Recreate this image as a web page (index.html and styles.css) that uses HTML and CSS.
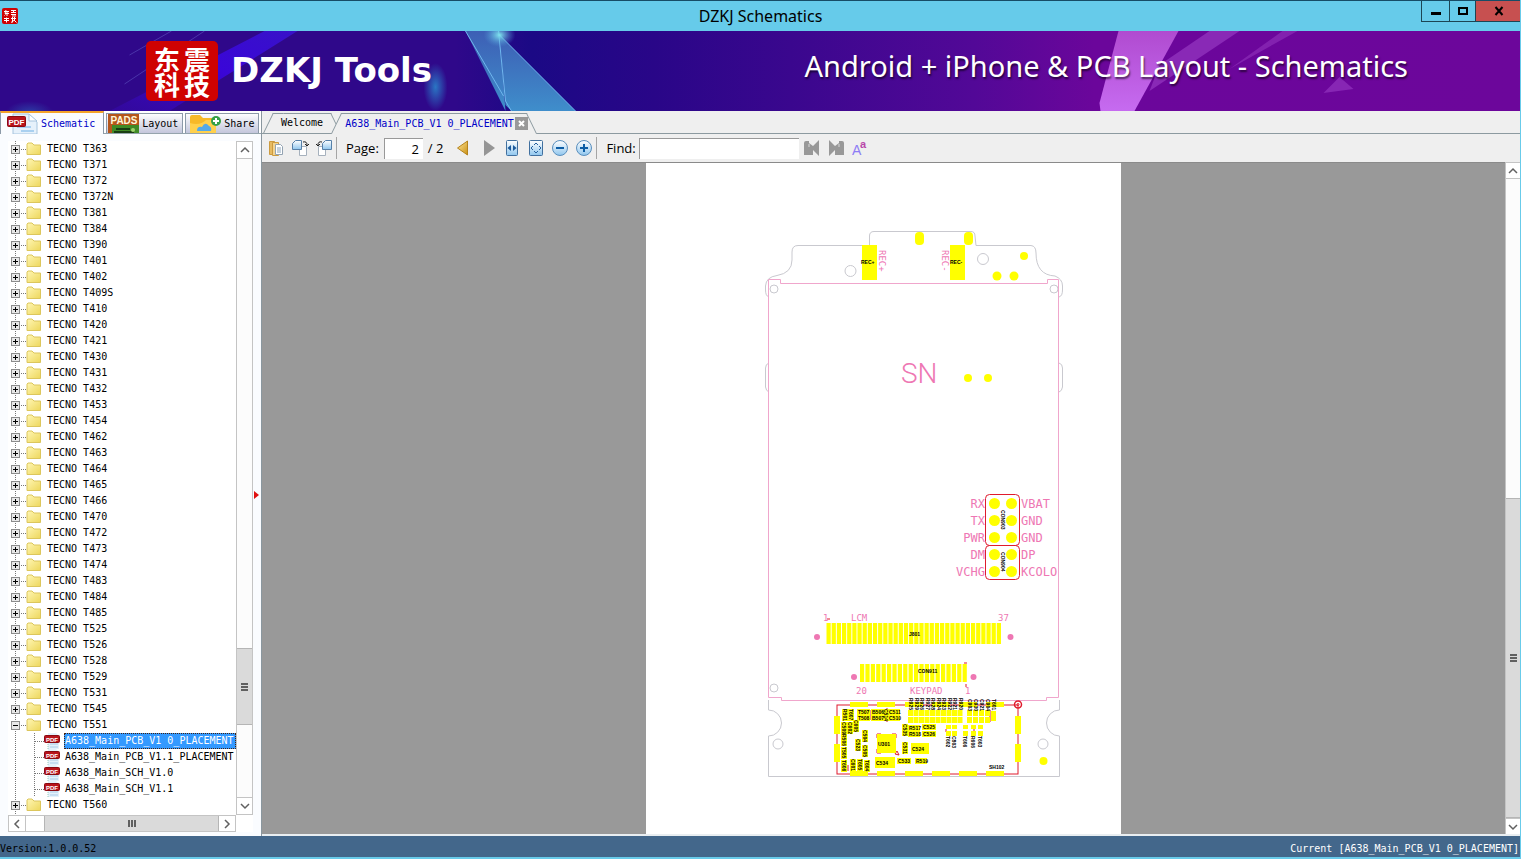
FILE: index.html
```html
<!DOCTYPE html>
<html lang="en">
<head>
<meta charset="UTF-8">
<meta name="viewport" content="width=device-width, initial-scale=1.0">
<title>DZKJ Schematics</title>
<link rel="stylesheet" href="styles.css">
</head>
<body>

<svg class="defs" aria-hidden="true">
  <defs>
    <linearGradient id="gFolder" x1="0" y1="0" x2="1" y2="1"><stop offset="0" stop-color="#fff6b4"/><stop offset="1" stop-color="#edd75c"/></linearGradient>
    <linearGradient id="gBlue" x1="0" y1="0" x2="0" y2="1"><stop offset="0" stop-color="#fff"/><stop offset="1" stop-color="#8fc6ee"/></linearGradient>
    <linearGradient id="gGold" x1="0" y1="0" x2="1" y2="1"><stop offset="0" stop-color="#ffe79a"/><stop offset="1" stop-color="#c98f12"/></linearGradient>
  </defs>
  <symbol id="i-folder" viewBox="0 0 16 14"><path d="M1 12.500V2L2 1H6L8 3H14.500V12.500Z" fill="url(#gFolder)" stroke="#dcc65c"/></symbol>
  <symbol id="i-pdf" viewBox="0 0 16 16"><path d="M4 0H12L15 3V16H4Z" fill="#e3f1fb"/><path d="M6 11H14M6 14H14" stroke="#a9cbe8"/><path d="M4 9V16" stroke="#9cb" stroke-dasharray="1 1"/><rect x="0.500" y="2.500" width="15" height="7" rx="1" fill="#b8141c" stroke="#8a0a12"/><text x="8" y="8.500" font-size="6" font-weight="700" text-anchor="middle" fill="#fff">PDF</text></symbol>
</svg>

<header class="titlebar">
  <svg class="app-icon" width="16" height="16"><rect width="16" height="16" rx="2" fill="#cf0202"/><path d="M2 3.500H7M4 2L3 5.500H7M5 4V8M2.500 7.500L3.500 6.500M9 2.500H14M9 4.500H14M11.500 2V5M9 6.500H14M10 8H14M2 10.500H7M2 12.500H7M4.500 9.500V14.500M9 10.500H14M10.500 9V14.500M12.500 9V12L9 14.500M12 12L14.500 14.500" stroke="#fff" fill="none"/></svg>
  <h1>DZKJ Schematics</h1>
  <div class="win-btns">
    <button class="min" aria-label="Minimize"><svg width="12" height="12"><path d="M1 8.500H11" stroke="#000" stroke-width="3"/></svg></button>
    <button class="max" aria-label="Maximize"><svg width="12" height="12"><rect x="2" y="3" width="8" height="6" fill="none" stroke="#000" stroke-width="2"/></svg></button>
    <button class="close" aria-label="Close"><svg width="10" height="10"><path d="M1.500 1L8.500 9M8.500 1L1.500 9" stroke="#000" stroke-width="2"/></svg></button>
  </div>
</header>

<div class="banner">
  <svg class="banner-art" viewBox="0 0 1521 80" preserveAspectRatio="xMidYMid slice" aria-hidden="true">
    <defs>
      <linearGradient id="bg"><stop offset="0" stop-color="#2f088a"/><stop offset=".3" stop-color="#2f088a"/><stop offset=".35" stop-color="#1b0985"/><stop offset=".43" stop-color="#290688"/><stop offset=".52" stop-color="#3a078e"/><stop offset=".64" stop-color="#520897"/><stop offset=".72" stop-color="#6b069b"/><stop offset="1" stop-color="#6c069b"/></linearGradient>
      <linearGradient id="beam" x1="1" y1="0" x2="0" y2="1"><stop offset="0" stop-color="#3812c8"/><stop offset=".45" stop-color="#3a06d8"/><stop offset="1" stop-color="#3a0ac0" stop-opacity=".3"/></linearGradient>
      <linearGradient id="glass" x1="0" y1="0" x2="0" y2="1"><stop offset="0" stop-color="#3d5fb5"/><stop offset="1" stop-color="#3f8ecb"/></linearGradient>
      <linearGradient id="pink" x1="0" y1="0" x2="0" y2="1"><stop offset="0" stop-color="#b04bd0"/><stop offset="1" stop-color="#c66bf0"/></linearGradient>
      <radialGradient id="glow"><stop offset="0" stop-color="#2a76c4"/><stop offset="1" stop-color="#2a76c4" stop-opacity="0"/></radialGradient>
      <radialGradient id="glow2"><stop offset="0" stop-color="#7fe4ee"/><stop offset="1" stop-color="#4e9ad8" stop-opacity="0"/></radialGradient>
    </defs>
    <rect width="1521" height="80" fill="url(#bg)"/>
    <path d="M265 0H298L170 80H110Z" fill="url(#beam)"/>
    <path d="M205 0L125 53M172 0L130 24" stroke="#5748b8" stroke-opacity=".7"/>
    <path d="M466 0H500L506 80Z" fill="url(#glass)"/>
    <path d="M500 4L506 74L512 80H576Z" fill="url(#glass)"/>
    <path d="M466 0L504 65M500 4L576 80M499 0L506 70L512 80" stroke="#6fb7ee" fill="none"/>
    <ellipse cx="500" cy="4" rx="16" ry="12" fill="url(#glow2)"/>
    <ellipse cx="436" cy="56" rx="12" ry="24" fill="url(#glow)"/>
    <ellipse cx="30" cy="82" rx="24" ry="12" fill="url(#glow)" opacity=".5"/>
    <path d="M1119 0H1179L1135 80H1101L1100 72Z" fill="url(#pink)"/>
    <path d="M1210 0H1240L1150 60L1160 34Z" fill="#9a3cc4" opacity=".65"/>
    <path d="M1283 0H1298L1230 38Z" fill="#9a3cc4" opacity=".5"/>
    <path d="M1324 62L1340 46L1354 58Z" fill="#9a3cc4" opacity=".6"/>
  </svg>
  <div class="logo"><span>东</span><span>震</span><span>科</span><span>技</span></div>
  <strong class="brand">DZKJ Tools</strong>
  <span class="slogan">Android + iPhone &amp; PCB Layout - Schematics</span>
</div>

<main class="main">
  <aside class="side">
    <nav class="side-tabs" role="tablist">
      <button class="side-tab active" role="tab" aria-selected="true">
        <svg width="31" height="21"><path d="M6 1H22L30 9V21H6Z" fill="#e6f1fb" stroke="#a6c4de"/><path d="M22 1V8H30Z" fill="#fff" stroke="#a6c4de"/><path d="M10 14H24M14 18H27" stroke="#a9d0f0" stroke-width="2"/><rect x="0.500" y="3.500" width="18" height="10" rx="1" fill="#b9131b" stroke="#8b0a10"/><text x="9.500" y="12" font-size="8" font-weight="700" text-anchor="middle" fill="#fff">PDF</text></svg>
        Schematic
      </button>
      <button class="side-tab" role="tab">
        <svg width="31" height="19"><rect width="31" height="19" fill="#b5561b"/><rect x="4" y="11" width="27" height="8" fill="#3f8a26"/><path d="M8 15H22M6 18H26" stroke="#183d13" stroke-width="2"/><circle cx="25" cy="16" r="2" fill="#9ed36d"/><text x="16" y="10" font-size="10" font-weight="700" text-anchor="middle" fill="#fff6d8">PADS</text></svg>
        Layout
      </button>
      <button class="side-tab share" role="tab">
        <svg width="31" height="19"><path d="M0 3Q0 1 2 1H10L13 4H24Q26 4 26 6V19H2Q0 19 0 17Z" fill="#f7b928"/><path d="M0 9Q10 12 16 6H26V19H0Z" fill="#ffd04c"/><path d="M7 17Q7 12 12 13Q15 7 19 12Q22 13 21 17Z" fill="#55a9e8"/><circle cx="26" cy="7" r="5" fill="#35a047"/><path d="M26 4V10M23 7H29" stroke="#fff" stroke-width="2"/></svg>
        Share
      </button>
    </nav>
    <div class="side-body">
      <div class="tree-box">
        <div class="tree-row">
          <ul class="tree" id="tree"></ul>
          <div class="vbar">
            <button aria-label="Scroll up"><svg width="10" height="8"><path d="M1 6L5 2L9 6" class="chev"/></svg></button>
            <div class="track tree-track"><div class="thumb"><i class="grip"></i></div></div>
            <button aria-label="Scroll down"><svg width="10" height="8"><path d="M1 2L5 6L9 2" class="chev"/></svg></button>
          </div>
        </div>
        <div class="hbar">
          <button aria-label="Scroll left"><svg width="8" height="10"><path d="M6 1L2 5L6 9" class="chev"/></svg></button>
          <div class="htrack"><div class="thumb"><i class="grip side-grip"></i></div></div>
          <button aria-label="Scroll right"><svg width="8" height="10"><path d="M2 1L6 5L2 9" class="chev"/></svg></button>
        </div>
      </div>
      <div class="splitter"><svg width="5" height="8"><path d="M0 0L5 4L0 8Z" fill="#e01010"/></svg></div>
    </div>
  </aside>

  <section class="work">
    <nav class="doc-tabs" role="tablist">
      <button class="doc-tab" role="tab"><span>Welcome</span></button>
      <div class="doc-tab active"><span role="tab" aria-selected="true">A638_Main_PCB_V1 0_PLACEMENT</span><button class="tab-x" aria-label="Close tab"><svg width="7" height="7"><path d="M1 1L6 6M6 1L1 6" stroke="#fff" stroke-width="2"/></svg></button></div>
    </nav>

    <div class="toolbar">
      <button class="tool" aria-label="Bookmarks"><svg width="16" height="16"><path d="M1.500 1.500H6.500V14.500H1.500Z" fill="#e7bb62" stroke="#cc9b3f"/><path d="M4.500 2.500H10.500V15.500H4.500Z" fill="#f4d490" stroke="#cc9b3f"/><path d="M7.500 4.500H12.500L14.500 6.500V14.500H7.500Z" fill="#fff" stroke="#93a3b2"/><path d="M9 8H13M9 10H13M9 12H13" stroke="#8ba4bb"/></svg></button>
      <button class="tool" aria-label="Rotate right"><svg width="17" height="16"><path d="M7.500 6.500H14.500V15.500H7.500Z" fill="#fff" stroke="#a6b1bd"/><path d="M3.500 .5H9.500V9.500H.5V3.500Z" fill="url(#gBlue)" stroke="#5780a8"/><path d="M11 2Q15 1 15 5M13 4L15 6L17 4" stroke="#222" fill="none"/></svg></button>
      <button class="tool" aria-label="Rotate left"><svg width="17" height="16"><path d="M2.500 6.500H9.500V15.500H2.500Z" fill="#fff" stroke="#a6b1bd"/><path d="M9.500 .5H15.500V9.500H6.500V3.500Z" fill="url(#gBlue)" stroke="#5780a8"/><path d="M6 2Q2 1 2 5M0 4L2 6L4 4" stroke="#222" fill="none"/></svg></button>
      <i class="sep"></i>
      <label for="page">Page:</label>
      <input id="page" type="text" value="2">
      <span class="total">/ 2</span>
      <button class="tool" aria-label="Previous page"><svg width="12" height="16"><path d="M10.500 1V15L.5 8Z" fill="url(#gGold)" stroke="#b5831c"/></svg></button>
      <button class="tool next" aria-label="Next page"><svg width="12" height="16"><path d="M1 0V16L12 8Z" fill="#959595"/></svg></button>
      <button class="tool" aria-label="Fit width"><svg width="14" height="16"><rect x="1.500" y=".5" width="11" height="15" rx="1" fill="url(#gBlue)" stroke="#41709f"/><path d="M6 5V11L2.500 8ZM8 5V11L11.500 8Z" fill="#1c5a9c"/></svg></button>
      <button class="tool" aria-label="Fit page"><svg width="14" height="16"><rect x=".5" y=".5" width="13" height="15" rx="1" fill="url(#gBlue)" stroke="#41709f"/><path d="M5 5L7 3L9 5M5 11L7 13L9 11M4 6L2 8L4 10M10 6L12 8L10 10" stroke="#27629f" fill="none"/></svg></button>
      <button class="tool" aria-label="Zoom out"><svg width="16" height="16"><circle cx="8" cy="8" r="7.500" fill="url(#gBlue)" stroke="#5a8fbd"/><path d="M4 8H12" stroke="#0c5da5" stroke-width="2"/></svg></button>
      <button class="tool" aria-label="Zoom in"><svg width="16" height="16"><circle cx="8" cy="8" r="7.500" fill="url(#gBlue)" stroke="#5a8fbd"/><path d="M4 8H12M8 4V12" stroke="#0c5da5" stroke-width="2"/></svg></button>
      <i class="sep"></i>
      <label for="find">Find:</label>
      <input id="find" type="text">
      <button class="tool find-prev" aria-label="Find previous"><svg width="16" height="16"><path d="M0 3Q0 1 2 1H5V3L9 6L15 0V16L9 10V15H0Z" fill="#989898"/><path d="M5 4V7" stroke="#d8d8d8"/></svg></button>
      <button class="tool" aria-label="Find next"><svg width="16" height="16"><path d="M16 3Q16 1 14 1H11V3L7 6L1 0V16L7 10V15H16Z" fill="#989898"/><path d="M11 4V7" stroke="#d8d8d8"/></svg></button>
      <button class="tool" aria-label="Match case"><svg width="16" height="16"><text x="0" y="15" font-size="14" fill="#8d7cf5">A</text><text x="8" y="8" font-size="11" font-weight="700" fill="#b847a9">a</text></svg></button>
    </div>

    <div class="viewer">
      <div class="desk">
        <div class="sheet"><svg id="pcb" width="475" height="671" viewBox="646 163 475 671" role="img" aria-label="PCB placement">
          <g class="outline">
            <path d="M769 297Q765.500 296 765.500 290V286Q766 277 777 275.500Q792 273 792 260V252Q792 245.500 798 245.500H869.500V236Q869.500 231.500 874 231.500H971Q975 231.500 975 236L976 245.500H1031Q1036 246 1036 253Q1036 275 1055 276Q1062.500 279 1062.500 286V290Q1062.500 296 1059 297"/>
            <path d="M769 363Q765.500 364 765.500 368V387Q766 391 769 392M1059 363Q1062.500 364 1062.500 368V387Q1062 391 1059 392"/>
            <path d="M768.500 700V710A13 13 0 1 1 768.500 736V776.500H1059.500V736A13 13 0 1 1 1059.500 710V700"/>
            <circle cx="850.500" cy="271" r="5.500"/><circle cx="983" cy="259" r="5.500"/>
            <circle cx="774" cy="289" r="4"/><circle cx="1054" cy="289" r="4"/><circle cx="774" cy="688" r="4"/>
            <circle cx="778" cy="744" r="5"/><circle cx="1043" cy="744" r="5"/>
          </g>
          <path class="shield" d="M768.500 697.500V279.500H780.500V283.500H1047.500V279.500H1058.500V697.500H1046.500V700.500H781.500V697.500Z"/>
          <g class="pad">
            <rect x="862" y="245" width="15" height="35"/><rect x="950" y="245" width="15" height="35"/>
            <rect x="915" y="232" width="9" height="13" rx="4"/><rect x="964" y="232" width="9" height="13" rx="4"/>
            <circle cx="1024" cy="256" r="4"/><circle cx="997" cy="276" r="4.500"/><circle cx="1014" cy="276" r="4.500"/>
            <circle cx="968" cy="378" r="4"/><circle cx="988" cy="378" r="4"/><circle cx="1043.500" cy="761" r="4"/>
          </g>
          <g class="red"><rect x="985.500" y="494.500" width="34" height="51" rx="4"/><rect x="985.500" y="545.500" width="34" height="34" rx="4"/></g>
          <g class="silk">
            <text x="901" y="383" class="sn">SN</text>
            <text x="1021" y="508">VBAT</text><text x="1021" y="525">GND</text><text x="1021" y="542">GND</text><text x="1021" y="559">DP</text><text x="1021" y="576">KCOLO</text>
            <g text-anchor="end"><text x="985" y="508">RX</text><text x="985" y="525">TX</text><text x="985" y="542">PWR</text><text x="985" y="559">DM</text><text x="985" y="576">VCHG</text></g>
            <g class="small"><text x="823" y="621">1</text><text x="851" y="621">LCM</text><text x="998" y="621">37</text><text x="856" y="694">20</text><text x="910" y="694">KEYPAD</text><text x="965" y="694">1</text>
            <text transform="translate(879 250) rotate(90)">REC+</text><text transform="translate(942 250) rotate(90)">REC-</text></g>
            <circle cx="817" cy="637" r="3"/><circle cx="1010.500" cy="637" r="3"/><circle cx="854" cy="677" r="3"/><circle cx="973.500" cy="677" r="3"/>
          </g>
        </svg></div>
      </div>
      <div class="vbar doc-bar">
        <button aria-label="Scroll up"><svg width="10" height="8"><path d="M1 6L5 2L9 6" class="chev"/></svg></button>
        <div class="track doc-track"><div class="thumb"><i class="grip"></i></div></div>
        <button aria-label="Scroll down"><svg width="10" height="8"><path d="M1 2L5 6L9 2" class="chev"/></svg></button>
      </div>
    </div>
  </section>
</main>

<footer class="status"><span>Version:1.0.0.52</span><span class="current">Current [A638_Main_PCB_V1 0_PLACEMENT]</span></footer>

<script src="script.js"></script>
</body>
</html>
```
FILE: styles.css
```css
*{box-sizing:border-box}
html,body{height:100%;margin:0}
body{display:flex;flex-direction:column;overflow:hidden;background:#efefef;color:#000;font:10px/16px "DejaVu Sans Mono","Liberation Mono",monospace;border-right:1px solid #68cbea}
button{font:inherit;color:inherit;margin:0;padding:0;border:0;background:none;display:flex;align-items:center;justify-content:center}
svg{display:block;flex:none}
svg text{font-family:"Liberation Sans",sans-serif}
ul{list-style:none;margin:0;padding:0}
.defs{position:absolute;width:0;height:0}

/* ---------- title bar ---------- */
.titlebar{position:relative;flex:none;height:31px;display:flex;align-items:center;background:#66cbea;border-top:1px solid #174c66;padding:0 18px 0 2px;margin-right:-1px}
.titlebar h1{flex:1;margin:0;text-align:center;font:400 16px/20px "Noto Sans","Open Sans",sans-serif}
.win-btns{position:absolute;right:0;top:0;display:flex;height:21px;border:1px solid #1c4554;border-width:0 0 1px 1px}
.win-btns button{width:28px;border-right:1px solid #1c4554}
.win-btns .max{width:26px}
.win-btns .close{width:45px;background:#c75050;border-right:0}

/* ---------- banner ---------- */
.banner{position:relative;flex:none;height:80px;display:flex;align-items:center;padding:0 112px 0 146px;color:#fff;overflow:hidden}
.banner-art{position:absolute;left:0;top:0;width:100%;height:100%}
.logo{position:relative;flex:none;width:72px;height:60px;padding:5px 6px;display:grid;grid-template-columns:1fr 1fr;grid-template-rows:1fr 1fr;place-items:center;background:#cf0202;border-radius:5px;font:700 26px/25px "Noto Sans CJK SC",sans-serif}
.brand{position:relative;margin-left:13px;padding-bottom:2px;font:700 34px/40px "DejaVu Sans",sans-serif}
.slogan{position:relative;margin-left:auto;padding-bottom:10px;font:400 29px/36px "Noto Sans",sans-serif;text-shadow:1px 2px 2px rgba(0,0,0,.6);white-space:nowrap}

.main{flex:1;min-height:0;display:flex}

/* ---------- left side ---------- */
.side{flex:none;width:262px;display:flex;flex-direction:column;border-right:1px solid #8a979f}
.side-tabs{flex:none;height:23px;display:flex;align-items:flex-end;gap:2px;background:#fff;border-bottom:1px solid #94a3ad}
.side-tab{height:20px;gap:3px;padding:0 4px 0 1px;overflow:hidden;border:1px solid #8c9aa8;border-bottom:0;background:linear-gradient(#fdfdfe,#c3c6dc)}
.side-tab.share{padding-left:4px}
.side-tab.active{height:23px;margin-bottom:-1px;padding:0 8px 0 6px;background:#fafcff;border-color:#8c9aa8;border-top:2px solid #f4a32a;color:#0000c8}
.side-body{flex:1;min-height:0;display:flex;padding:7px 0 4px 8px;background:#fafcff}
.tree-box{flex:1;min-width:0;display:flex;flex-direction:column;background:#fff}
.tree-row{flex:1;min-height:0;display:flex}
.tree{flex:1;min-width:0;overflow:hidden;background:linear-gradient(#777 1px,transparent 1px) 7px 0/1px 2px repeat-y}
.node{display:flex;align-items:center;height:16px;padding-left:3px;white-space:nowrap}
.node .toggle{width:9px;height:9px;border:1px solid #8c8c8c;background:#e8e8e8}
.node .toggle::before{content:"";width:5px;height:1px;background:#000}
.node .toggle::after{content:"";width:1px;height:5px;margin-left:-3px;margin-right:2px;background:#000}
.node.open .toggle::after{display:none}
.dots{width:6px;height:1px;background:linear-gradient(90deg,#777 1px,transparent 1px) 1px 0/2px 1px}
.node svg{margin-right:4px}
.kids{margin-left:26px;background:linear-gradient(#777 1px,transparent 1px) 0 0/1px 2px repeat-y}
.kids .node{padding-left:0}
.kids .dots{width:10px}
.name{padding:0 1px}
.kids .selected .name{flex:1;background:#3399ff;color:#fff;outline:1px dotted #421;outline-offset:-1px}
.splitter{width:8px;display:flex;align-items:center;padding:16px 0 0 1px}

/* ---------- scroll bars ---------- */
.vbar{flex:none;width:17px;display:flex;flex-direction:column;border:1px solid #c4c4c4;background:#fcfcfc}
.vbar button{height:16px;background:#fff}
.chev{fill:none;stroke:#606060;stroke-width:1.500}
.track{flex:1;display:flex;flex-direction:column;border:1px solid #c4c4c4;border-width:1px 0}
.track::before{content:"";flex:491}
.track::after{content:"";flex:72}
.track .thumb{flex:76}
.doc-track::before{flex:320}
.doc-track::after{flex:0}
.doc-track .thumb{flex:320}
.thumb{display:flex;align-items:center;justify-content:center;background:#dadada;border:1px solid #b5b5b5;border-width:1px 0}
.grip{width:7px;height:8px;background:repeating-linear-gradient(#606060 0 2px,transparent 2px 3px)}
.grip.side-grip{width:8px;height:7px;background:repeating-linear-gradient(90deg,#606060 0 2px,transparent 2px 3px)}
.hbar{flex:none;height:17px;margin-right:17px;display:flex;border:1px solid #c4c4c4}
.hbar button{width:16px}
.htrack{flex:1;display:flex;padding-left:18px;border-left:1px solid #c4c4c4}
.htrack .thumb{flex:1;border-width:0 1px}
.doc-bar{width:15px;border-width:1px 0 0 1px}
.doc-bar button{height:15px}

/* ---------- work area ---------- */
.work{flex:1;min-width:0;display:flex;flex-direction:column}
.doc-tabs{flex:none;height:23px;display:flex;align-items:flex-end;padding-left:6px;border-bottom:1px solid #8c9aa0}
.doc-tab{position:relative;z-index:0;height:20px;display:flex;align-items:center;padding:0 13px}
.doc-tab::before,.doc-tab::after{content:"";position:absolute;z-index:-1;top:0;bottom:0;border-top:1px solid #8c9aa0;background:#efefef}
.doc-tab::before{left:0;right:30%;border-left:1px solid #8c9aa0;transform:skewX(-26deg)}
.doc-tab::after{left:30%;right:0;border-right:1px solid #8c9aa0;transform:skewX(26deg)}
.doc-tab.active{margin-bottom:-1px;height:21px;padding:0 4px 0 9px;color:#0000c8}
.tab-x{width:13px;height:13px;margin-left:1px;background:#999}
.toolbar{flex:none;height:28px;display:flex;align-items:center;padding-left:6px;gap:8px;font:13px/18px "Open Sans",sans-serif}
.tool{width:16px;height:20px}
.sep{width:1px;height:22px;margin:0 1px 0 -4px;background:#a5a5a5}
.toolbar input{height:21px;border:1px solid #999;border-width:1px 0 0 1px;padding:0 4px;font:inherit;background:#fff}
#page{width:39px;margin-left:-3px;text-align:right}
.total{margin-left:-3px;margin-right:4px}
.next{margin-left:2px;margin-right:-1px}
#find{width:160px;margin-left:-5px}
.find-prev{margin-left:-3px}
.viewer{flex:1;min-height:0;display:flex;border-bottom:2px solid #e9eef1}
.desk{flex:1;min-width:0;display:flex;justify-content:center;background:#999;border-top:1px solid #8a8a8a;overflow:hidden}
.sheet{background:#fff}

/* ---------- board ---------- */
.outline{fill:none;stroke:#c9c9cf}
.shield{fill:none;stroke:#f0a6cc}
.pad{fill:#ffff00}
.red{fill:none;stroke:#e01b2c}
.silk{fill:#ee77b3}
.silk text{font-family:"DejaVu Sans Mono",monospace;font-size:12px}
.silk .small text{font-size:9px}
.silk .sn{font-family:Roboto,sans-serif;font-size:28px;font-weight:300}
.ref text{font-size:5px;font-weight:700;fill:#000}

.status{flex:none;height:23px;display:flex;justify-content:space-between;align-items:flex-end;background:#43678b;border-bottom:2px solid #68cbea}
.current{color:#fff;padding-right:1px}
```
FILE: script.js
```js
const models = ["T363","T371","T372","T372N","T381","T384","T390","T401","T402","T409S","T410","T420","T421","T430","T431","T432","T453","T454","T462","T463","T464","T465","T466","T470","T472","T473","T474","T483","T484","T485","T525","T526","T528","T529","T531","T545","T551","T560"];
const files = ["A638_Main_PCB_V1 0_PLACEMENT","A638_Main_PCB_V1.1_PLACEMENT","A638_Main_SCH_V1.0","A638_Main_SCH_V1.1"];

document.getElementById("tree").innerHTML = models.map(m => {
  const open = m === "T551";
  const kids = files.map((f, i) => `<li class="node${i ? "" : " selected"}"><i class="dots"></i><svg width="16" height="16"><use href="#i-pdf"/></svg><span class="name">${f}</span></li>`).join("");
  return `<li><div class="node${open ? " open" : ""}"><button class="toggle" aria-label="Toggle TECNO ${m}"></button><i class="dots"></i><svg width="16" height="14"><use href="#i-folder"/></svg><span class="name">TECNO ${m}</span></div>${open ? `<ul class="kids">${kids}</ul>` : ""}</li>`;
}).join("");

// board parts
const pads = [], red = [], refs = [];
const pad = (x, y, w, h) => pads.push(`<rect x="${x}" y="${y}" width="${w}" height="${h}"/>`);
const ref = (t, x, y) => refs.push(`<text x="${x}" y="${y}">${t}</text>`);
const vref = (t, x, y) => refs.push(`<text transform="translate(${x} ${y}) rotate(90)">${t}</text>`);
const part = (t, x, y, w, h) => { pad(x, y, w, h); ref(t, x + 1, y + h / 2 + 2); };
const vpart = (t, x, y) => { pad(x, y, 6, 12); vref(t, x + 1, y); };

// test pads of the two connectors
[503.5, 520.5, 537.5, 554.5, 571.5].forEach(y => pads.push(`<circle cx="994.5" cy="${y}" r="5.500"/><circle cx="1011.5" cy="${y}" r="5.500"/>`));
for (let i = 0; i < 34; i++) pad(826.5 + i * 5.16, 623, 4.2, 21);
for (let i = 0; i < 20; i++) pad(860 + i * 5.4, 664, 4.2, 18);

// shield frame
red.push(`<rect x="837" y="705" width="181" height="69"/><circle cx="1018" cy="704.5" r="3.500" stroke-width="1.500"/><circle cx="1018" cy="704.5" r="1"/>`);
[850, 877, 905, 932, 959, 986].forEach(x => { pad(x, 702, 18, 5); pad(x, 771, 18, 5); });
[716, 744].forEach(y => { pad(834, y, 6, 18); pad(1015, y, 6, 18); });

["R925","R929","R926","R927","R928","R924","R923","R922","R921","R920"].forEach((t, i) => { pad(908 + i * 5.5, 710, 5, 6); pad(908 + i * 5.5, 717, 5, 6); vref(t, 909 + i * 5.5, 698); });
["C903","C930","C921","C904"].forEach((t, i) => { pad(967 + i * 6, 710, 5, 6); pad(967 + i * 6, 717, 5, 6); vref(t, 968 + i * 6, 699); });
pad(991, 711, 5, 10); vref("T601", 992, 699);
[["T602",946],["C803",952],["T606",963],["R606",971],["T603",978]].forEach(([t, x]) => { pad(x, 725, 5, 4); pad(x, 731, 5, 5); vref(t, x, 736); });

part("T507", 857, 709, 13, 6); part("B506", 871, 709, 12, 6); part("C511", 888, 709, 12, 6);
part("T508", 857, 715, 13, 6); part("B507", 871, 715, 12, 6); part("C510", 888, 715, 12, 6);
part("R517", 908, 725, 12, 6); part("C525", 922, 724, 14, 6);
part("R518", 908, 731, 12, 6); part("C526", 922, 731, 14, 6);
part("C524", 911, 743, 18, 11); part("C533", 897, 758, 14, 6); part("R519", 915, 758, 12, 6); part("C534", 875, 757, 20, 11);
part("U301", 877, 734, 19, 19);
[["R501",842,709],["T607",848,709],["C509",841,722],["C602",847,722],["C605",853,720],["R506",841,734],["T505",841,747],["C523",855,739],["C504",862,730],["C505",862,745],["T606",841,760],["C601",850,759],["T605",857,759],["T604",864,760],["C514",883,709],["C535",902,724],["C531",902,742]].forEach(a => vpart(...a));
red.push(`<path d="M877 738V734H881M892 734H896V738M877 749V753H881M870 710V720M887 708V722M848 765V771M897 751L899 755L895 754ZM990 710V722M946 729V732M974 729V732M827 619H830M964 663H967M966 684V687"/>`);

ref("SH102", 989, 769); ref("J801", 909, 636); ref("CON911", 918, 673); ref("REC+", 861, 264); ref("REC-", 950, 264);
vref("CON903", 1001, 510); vref("CON904", 1001, 552);

document.getElementById("pcb").insertAdjacentHTML("beforeend", `<g class="red">${red.join("")}</g><g class="pad">${pads.join("")}</g><g class="ref">${refs.join("")}</g>`);
```
